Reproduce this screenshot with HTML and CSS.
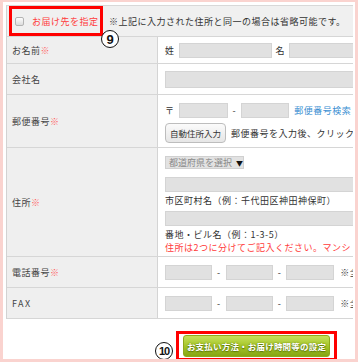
FILE: index.html
```html
<!DOCTYPE html>
<html lang="ja">
<head>
    <meta charset="UTF-8">
    <meta name="viewport" content="width=device-width, initial-scale=1.0">
    <title>お届け先の入力</title>
    <link rel="stylesheet" href="styles.css">
</head>
<body>
    <div class="frame">
        <!-- お届け先入力テーブル -->
        <div class="form-table">
            <div class="row row-deliv">
                <label class="deliv-check">
                    <input type="checkbox" class="chk">
                    <span class="deliv-label">お届け先を指定</span>
                </label>
                <span class="deliv-note">※上記に入力された住所と同一の場合は省略可能です。</span>
                <span class="mark mark-9">9</span>
            </div>

            <div class="row row-name">
                <div class="th">お名前<span class="req">※</span></div>
                <div class="td">
                    <span class="pre">姓</span><input type="text" class="box w-name">
                    <span class="pre pre-2">名</span><input type="text" class="box w-name">
                </div>
            </div>

            <div class="row row-company">
                <div class="th">会社名</div>
                <div class="td">
                    <input type="text" class="box w-full tall">
                </div>
            </div>

            <div class="row row-zip">
                <div class="th">郵便番号<span class="req">※</span></div>
                <div class="td td-stack">
                    <div class="line">
                        <span class="pre">〒</span><input type="text" class="box w-zip1">
                        <span class="sep">-</span><input type="text" class="box w-zip2">
                        <a href="#" class="zip-link">郵便番号検索</a>
                    </div>
                    <div class="line line-btn">
                        <button type="button" class="btn-auto">自動住所入力</button>
                        <span class="hint">郵便番号を入力後、クリック</span>
                    </div>
                </div>
            </div>

            <div class="row row-addr">
                <div class="th">住所<span class="req">※</span></div>
                <div class="td td-stack">
                    <div class="pref">都道府県を選択<span class="arrow">▼</span></div>
                    <input type="text" class="box w-full addr1">
                    <p class="ex">市区町村名（例：千代田区神田神保町）</p>
                    <input type="text" class="box w-full addr2">
                    <p class="ex">番地・ビル名（例：1-3-5）</p>
                    <p class="ex warn">住所は2つに分けてご記入ください。マンシ</p>
                </div>
            </div>

            <div class="row row-tel">
                <div class="th">電話番号<span class="req">※</span></div>
                <div class="td">
                    <input type="text" class="box w-tel">
                    <span class="sep">-</span><input type="text" class="box w-tel">
                    <span class="sep">-</span><input type="text" class="box w-tel3">
                    <span class="note">※全</span>
                </div>
            </div>

            <div class="row row-fax">
                <div class="th th-fax">FAX</div>
                <div class="td">
                    <input type="text" class="box w-tel">
                    <span class="sep">-</span><input type="text" class="box w-tel">
                    <span class="sep">-</span><input type="text" class="box w-tel3">
                    <span class="note">※全</span>
                </div>
            </div>
        </div>

        <!-- 次へボタン -->
        <div class="next">
            <span class="mark mark-10">10</span>
            <div class="next-box">
                <button type="button" class="btn-next">お支払い方法・お届け時間等の設定</button>
            </div>
        </div>
    </div>
</body>
</html>
```

FILE: styles.css
```css
body {
    margin: 0;
    background-color: #fff;
    color: #333;
    font-family: "Noto Sans CJK JP", "Noto Sans", sans-serif;
    font-size: 9px;
    letter-spacing: 0.5px;
}

.frame {
    width: 347px;
    height: 354px;
    border: 3px solid #fad3cf;
    border-top-width: 2px;
    padding: 3px 2px 0 3px;
    overflow: hidden;
}

.form-table {
    width: 346px;
    border-left: 1px solid #d2d2d2;
    border-top: 1px solid #d8d8d8;
}

.row {
    display: grid;
    grid-template-columns: 151px 1fr;
    border-bottom: 1px solid #d6d6d6;
}

.th {
    display: flex;
    align-items: center;
    padding-left: 5px;
    background-color: #efefef;
    border-right: 1px solid #d4d4d4;
    color: #444;
}

.th-fax {
    letter-spacing: 1.5px;
}

.req {
    color: #ff5c5c;
}

.td {
    display: flex;
    align-items: center;
    padding-left: 7px;
    white-space: nowrap;
    overflow: hidden;
}

.td-stack {
    flex-direction: column;
    align-items: flex-start;
    justify-content: flex-start;
}

/* お届け先指定の行 */
.row-deliv {
    display: flex;
    align-items: center;
    position: relative;
    height: 30px;
    padding-left: 2px;
    background-color: #f0f0f0;
}

.deliv-check {
    display: flex;
    align-items: center;
    box-sizing: border-box;
    width: 94px;
    height: 30px;
    border: 3px solid #f00;
    padding-left: 3px;
}

.chk {
    appearance: none;
    width: 9px;
    height: 9px;
    margin: 0 8px 0 0;
    border: 1px solid #b4b4b4;
    border-radius: 2px;
    background: linear-gradient(#fdfdfd, #dcdcdc);
}

.deliv-label {
    color: #ff3b3b;
}

.deliv-note {
    margin-left: 6px;
    white-space: nowrap;
}

.mark {
    display: flex;
    align-items: center;
    justify-content: center;
    box-sizing: border-box;
    width: 18px;
    height: 18px;
    border: 1.5px solid #111;
    border-radius: 50%;
    background-color: #fff;
    color: #111;
    font-family: "Liberation Sans", Arial, sans-serif;
    font-weight: bold;
    letter-spacing: 0;
}

.mark-9 {
    position: absolute;
    left: 94px;
    top: 24px;
    font-size: 13px;
}

.mark-10 {
    font-size: 11px;
    letter-spacing: -1px;
    margin-top: 9px;
}

/* 入力欄 */
.box {
    box-sizing: border-box;
    height: 15px;
    padding: 0;
    margin: 0;
    border: 1px solid #d4d4d4;
    background-color: #e1e1e1;
    flex: none;
}

.tall {
    height: 17px;
}

.w-name { width: 93px; }
.w-full { width: 220px; }
.w-zip1 { width: 49px; }
.w-zip2 { width: 48px; }
.w-tel { width: 47px; }
.w-tel3 { width: 48px; }

.pre {
    margin-right: 4px;
}

.pre-2 {
    margin-left: 4px;
}

.sep {
    margin: 0 5px;
}

.row-name {
    height: 26px;
}

.row-company {
    height: 30px;
}

.row-zip {
    height: 52px;
}

.row-zip .td {
    padding-top: 8px;
}

.line {
    display: flex;
    align-items: center;
}

.line-btn {
    margin-top: 5px;
}

.zip-link {
    margin-left: 5px;
    color: #3b8fd2;
    text-decoration: none;
}

.btn-auto {
    width: 61px;
    height: 20px;
    padding: 0;
    border: 1px solid #bdbdbd;
    border-radius: 4px;
    background: linear-gradient(#fbfbfb, #e6e6e6);
    color: #333;
    font-family: inherit;
    font-size: 8.5px;
    letter-spacing: 0;
}

.hint {
    margin-left: 5px;
}

.row-addr {
    height: 108px;
}

.row-addr .td {
    padding-top: 8px;
}

.pref {
    display: flex;
    align-items: center;
    box-sizing: border-box;
    width: 79px;
    height: 13px;
    padding-left: 3px;
    border: 1px solid #d0d0d0;
    background-color: #e2e2e2;
    color: #8a8a8a;
    letter-spacing: 0;
}

.arrow {
    color: #111;
    font-size: 7px;
    margin-left: 4px;
}

.addr1 {
    margin-top: 8px;
}

.addr2 {
    margin-top: 4px;
}

.ex {
    margin: 0;
    height: 13px;
    line-height: 13px;
}

.addr1 + .ex {
    margin-top: 2px;
}

.addr2 + .ex {
    margin-top: 2px;
}

.warn {
    color: #ff3b3b;
}

.row-tel,
.row-fax {
    height: 30px;
}

.note {
    margin-left: 6px;
}

/* 次へ */
.next {
    display: flex;
    justify-content: flex-end;
    align-items: center;
    gap: 3px;
    margin-top: 12px;
    padding-right: 16px;
}

.next-box {
    border: 3px solid #f00;
    padding: 1px 4px;
}

.btn-next {
    display: block;
    width: 147px;
    height: 22px;
    padding: 0;
    border: 1px solid #8fa81c;
    border-radius: 3px;
    background: linear-gradient(#c6e05a, #a6c62a 50%, #86a512);
    color: #fff;
    font-family: inherit;
    font-size: 8.5px;
    font-weight: bold;
    letter-spacing: 0.2px;
    text-shadow: 0 0 2px #5f7a06, 0 1px 1px #5f7a06;
}
```
